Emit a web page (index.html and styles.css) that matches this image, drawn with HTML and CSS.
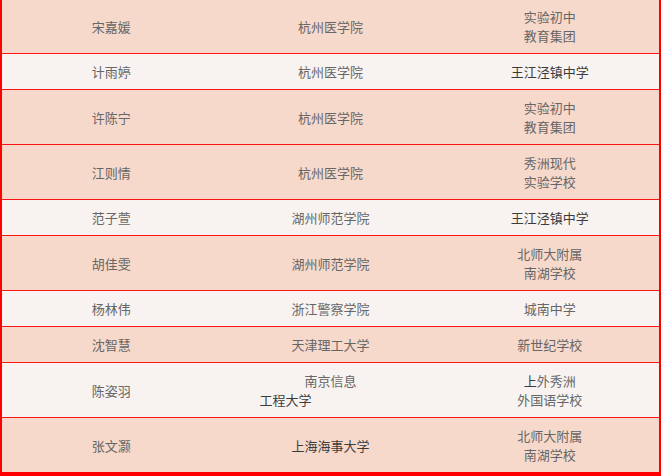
FILE: index.html
```html
<!DOCTYPE html>
<html lang="zh-CN">
<head>
<meta charset="utf-8">
<title>名单</title>
<link rel="stylesheet" href="styles.css">
</head>
<body>
<table class="list">
  <tbody>
    <tr class="odd first"><td>宋嘉媛</td><td>杭州医学院</td><td>实验初中<br>教育集团</td></tr>
    <tr class="even"><td>计雨婷</td><td>杭州医学院</td><td class="dark">王江泾镇中学</td></tr>
    <tr class="odd"><td>许陈宁</td><td>杭州医学院</td><td>实验初中<br>教育集团</td></tr>
    <tr class="odd"><td>江则情</td><td>杭州医学院</td><td>秀洲现代<br>实验学校</td></tr>
    <tr class="even"><td>范子萱</td><td>湖州师范学院</td><td class="dark">王江泾镇中学</td></tr>
    <tr class="odd"><td>胡佳雯</td><td>湖州师范学院</td><td>北师大附属<br>南湖学校</td></tr>
    <tr class="even"><td>杨林伟</td><td>浙江警察学院</td><td>城南中学</td></tr>
    <tr class="odd"><td>沈智慧</td><td>天津理工大学</td><td>新世纪学校</td></tr>
    <tr class="even"><td>陈姿羽</td><td><span class="line">南京信息</span><span class="line shift dark">工程大学</span></td><td><span class="dark">上</span>外秀洲<br>外国语学校</td></tr>
    <tr class="odd last"><td>张文灏</td><td class="dark">上海海事大学</td><td>北师大附属<br>南湖学校</td></tr>
  </tbody>
</table>
</body>
</html>
```

FILE: styles.css
```css
html, body {
  margin: 0;
  padding: 0;
  background: #ffffff;
}

.list {
  width: 661px;
  border-collapse: collapse;
  table-layout: fixed;
  border-left: 2px solid #ff0000;
  border-right: 2px solid #ff0000;
  border-bottom: 4px solid #ff0000;
  font-family: "Noto Sans CJK SC", "Noto Sans", sans-serif;
  font-size: 13px;
  color: #666666;
}

.list td {
  padding: 8px 4px;
  line-height: 19px;
  text-align: center;
  vertical-align: middle;
  border-bottom: 1px solid #ff1414;
}

.list tr.first td {
  padding-top: 7px;
}

.list tr.last td {
  border-bottom: none;
}

.odd td {
  background: #f7d9cb;
}

.even td {
  background: #f8f3f0;
}

.dark {
  color: #3c3c3c;
}

.line {
  display: block;
}

.shift {
  padding-right: 90px;
}
```
